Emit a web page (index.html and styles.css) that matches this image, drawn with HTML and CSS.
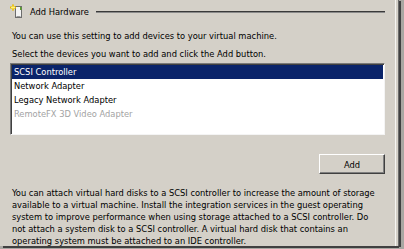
FILE: index.html
```html
<!DOCTYPE html>
<html>
<head>
<meta charset="utf-8">
<link rel="stylesheet" href="styles.css">
</head>
<body>
<div class="panel">
  <div class="header">
    <svg class="icon" width="14" height="15" viewBox="0 0 14 15">
      <rect x="5.5" y="2.5" width="6" height="11" fill="#f4f4f4" stroke="#6d6d6d"/>
      <rect x="6.5" y="12" width="4" height="1" fill="#9a9a9a"/>
      <rect x="10" y="3" width="1.5" height="3" fill="#5aa02c"/>
      <path d="M3 0.5v6M0 3.5h6" stroke="#e8b800" stroke-width="2"/>
      <path d="M3 1.5v4M1 3.5h4" stroke="#fff27a" stroke-width="1"/>
    </svg>
    <span class="title">Add Hardware</span>
    <div class="rule"></div>
  </div>
  <p class="text first">You can use this setting to add devices to your virtual machine.</p>
  <p class="text second">Select the devices you want to add and click the Add button.</p>
  <div class="list">
    <div class="item selected">SCSI Controller</div>
    <div class="item">Network Adapter</div>
    <div class="item">Legacy Network Adapter</div>
    <div class="item disabled">RemoteFX 3D Video Adapter</div>
  </div>
  <div class="actions"><button class="btn">Add</button></div>
  <p class="desc">You can attach virtual hard disks to a SCSI controller to increase the amount of storage available to a virtual machine. Install the integration services in the guest operating system to improve performance when using storage attached to a SCSI controller. Do not attach a system disk to a SCSI controller. A virtual hard disk that contains an operating system must be attached to an IDE controller.</p>
</div>
</body>
</html>
```
FILE: styles.css
```css
html, body {
  margin: 0;
  padding: 0;
  width: 404px;
  height: 249px;
  overflow: hidden;
  background: #a9a7a2;
}
.panel {
  box-sizing: border-box;
  width: 396px;
  height: 246px;
  background: #d4d0c8;
  border-right: 1px solid #f6f5f2;
  box-shadow: 2px 0 0 #d4d0c8, 3px 0 0 #6a6a6a, 5px 1px 0 #404040, 3px 2px 0 #404040;
  padding: 3px 10px 0 10px;
  font-family: "DejaVu Sans Condensed", "DejaVu Sans", sans-serif;
  font-size: 9.25px;
  color: #000;
  overflow: hidden;
}
.header {
  display: flex;
  align-items: center;
  height: 17px;
}
.icon {
  margin-right: 6px;
  flex: none;
}
.title {
  flex: none;
  margin-right: 7px;
}
.rule {
  flex: 1;
  height: 0;
  border-top: 1px solid #3a3a3a;
  border-bottom: 1px solid #8a8a8a;
}
.text {
  margin: 0;
  padding-left: 2px;
  line-height: 14px;
}
.first { margin-top: 9px; }
.second { margin-top: 4px; }
.list {
  margin-top: 2px;
  height: 72px;
  box-sizing: border-box;
  background: #fff;
  border-top: 1px solid #7a7a7a;
  border-left: 1px solid #7a7a7a;
  border-right: 1px solid #f4f4f4;
  border-bottom: 1px solid #f4f4f4;
  box-shadow: inset 1px 1px 0 #404040;
  padding: 1px 1px 0 1px;
}
.item {
  height: 14px;
  line-height: 14px;
  padding-left: 2px;
}
.item.selected {
  background: #0a246a;
  color: #fff;
}
.item.disabled {
  color: #a3a3a3;
}
.actions {
  display: flex;
  justify-content: flex-end;
  margin-top: 19px;
}
.btn {
  width: 66px;
  height: 20px;
  font: inherit;
  background: #d4d0c8;
  border-top: 1px solid #fff;
  border-left: 1px solid #fff;
  border-right: 1px solid #404040;
  border-bottom: 1px solid #404040;
  box-shadow: inset -1px -1px 0 #808080;
  padding: 0;
  color: #000;
}
.desc {
  margin: 13px 0 0 2px;
  width: 371px;
  line-height: 12px;
}
```
